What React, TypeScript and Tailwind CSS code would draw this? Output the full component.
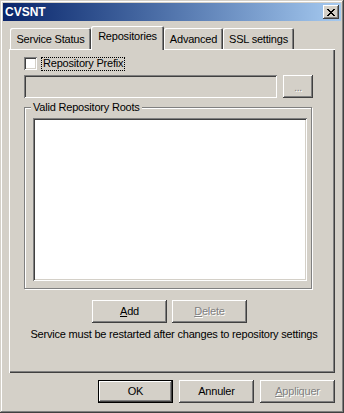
import React from "react";

const raised =
  "shadow-[inset_-1px_-1px_#404040,inset_1px_1px_#ffffff,inset_-2px_-2px_#808080,inset_2px_2px_#d4d0c8]";
const sunken =
  "shadow-[inset_1px_1px_#808080,inset_-1px_-1px_#ffffff,inset_2px_2px_#404040,inset_-2px_-2px_#d4d0c8]";

function Btn({
  children,
  className = "",
  disabled = false,
  def = false,
}: {
  children: React.ReactNode;
  className?: string;
  disabled?: boolean;
  def?: boolean;
}) {
  const base = def
    ? "border border-black shadow-[inset_-1px_-1px_#404040,inset_1px_1px_#ffffff,inset_-2px_-2px_#808080]"
    : raised;
  return (
    <div
      className={`w-[75px] h-[23px] bg-[#d4d0c8] flex items-center justify-center text-[11px] leading-none ${base} ${
        disabled ? "text-[#808080] [text-shadow:1px_1px_0_#ffffff]" : "text-black"
      } ${className}`}
    >
      {children}
    </div>
  );
}

function Tab({
  label,
  w,
  selected = false,
}: {
  label: string;
  w: string;
  selected?: boolean;
}) {
  return selected ? (
    <div
      className={`${w} h-[24px] -mb-[1px] relative z-10 bg-[#d4d0c8] rounded-tl-[2px] rounded-tr-[2px] shadow-[inset_1px_1px_#ffffff,inset_-1px_0_#404040,inset_-2px_0_#808080] flex justify-center pt-[4px] text-[11px] leading-[13px] text-black`}
    >
      {label}
    </div>
  ) : (
    <div
      className={`${w} h-[21px] bg-[#d4d0c8] rounded-tl-[2px] rounded-tr-[2px] shadow-[inset_1px_1px_#ffffff,inset_-1px_0_#404040,inset_-2px_0_#808080] flex justify-center pt-[5px] text-[11px] leading-[13px] text-black`}
    >
      {label}
    </div>
  );
}

export default function App() {
  return (
    <div className="w-[344px] h-[413px] bg-[#d4d0c8] font-['Liberation_Sans',Arial,sans-serif] tracking-[-0.2px] shadow-[inset_-1px_-1px_#404040,inset_1px_1px_#d4d0c8,inset_-2px_-2px_#808080,inset_2px_2px_#ffffff] p-[3px] flex flex-col select-none">
      {/* Title bar */}
      <div className="h-[18px] bg-gradient-to-r from-[#0a246a] to-[#a6caf0] flex items-center pl-[2px] pr-[2px]">
        <div className="text-white font-bold text-[12px] leading-none tracking-[0px]">CVSNT</div>
        <div className="flex-1" />
        <div className={`w-[16px] h-[14px] bg-[#d4d0c8] ${raised} flex items-center justify-center`}>
          <svg width="8" height="7" viewBox="0 0 8 7" shapeRendering="crispEdges">
            <path
              d="M0 0h2v1H0zM6 0h2v1H6zM1 1h2v1H1zM5 1h2v1H5zM2 2h4v1H2zM3 3h2v1H3zM2 4h4v1H2zM1 5h2v1H1zM5 5h2v1H5zM0 6h2v1H0zM6 6h2v1H6z"
              fill="#000"
            />
          </svg>
        </div>
      </div>

      {/* Body */}
      <div className="pl-[6px] flex flex-col">
        {/* Tabs */}
        <div className="mt-[5px] h-[23px] flex items-end pl-[1px]">
          <Tab label="Service Status" w="w-[81px]" />
          <Tab label="Repositories" w="w-[73px]" selected />
          <Tab label="Advanced" w="w-[59px]" />
          <Tab label="SSL settings" w="w-[71px]" />
        </div>

        {/* Panel */}
        <div className="w-[326px] h-[324px] bg-[#d4d0c8] shadow-[inset_1px_1px_#ffffff,inset_-1px_-1px_#404040,inset_-2px_-2px_#808080] pl-[15px] pr-[11px] pt-[8px] flex flex-col text-[11px] text-black">
          {/* Checkbox row */}
          <div className="h-[13px] flex items-center">
            <div className={`w-[13px] h-[13px] bg-white ${sunken}`} />
            <div className="ml-[4px] h-[14px] border border-dotted border-black px-[1px] flex items-center leading-none">
              Repository Prefix
            </div>
          </div>

          {/* Edit row */}
          <div className="mt-[5px] flex">
            <div className={`w-[253px] h-[23px] bg-[#d4d0c8] ${sunken}`} />
            <div className={`ml-[6px] w-[30px] h-[23px] bg-[#d4d0c8] ${raised} flex items-center justify-center text-[#808080] [text-shadow:1px_1px_0_#ffffff] text-[10px] leading-none pt-[3px]`}>
              ...
            </div>
          </div>

          {/* Group box */}
          <div className="mt-[9px] relative w-[288px] h-[182px] border border-[#808080] shadow-[1px_1px_0_#ffffff,inset_1px_1px_0_#ffffff] pl-[8px] pt-[10px]">
            <div className="absolute left-[6px] -top-[7px] bg-[#d4d0c8] px-[2px] leading-[13px]">
              Valid Repository Roots
            </div>
            <div className={`w-[274px] h-[163px] bg-white ${sunken}`} />
          </div>

          {/* Add / Delete */}
          <div className="mt-[11px] ml-[68px] flex gap-[5px]">
            <Btn>
              <span>
                <span className="underline">A</span>dd
              </span>
            </Btn>
            <Btn disabled>
              <span>
                <span className="underline">D</span>elete
              </span>
            </Btn>
          </div>

          <div className="mt-[5px] text-center leading-[13px] whitespace-nowrap">
            Service must be restarted after changes to repository settings
          </div>
        </div>

        {/* Bottom buttons */}
        <div className="mt-[7px] w-[326px] flex justify-end gap-[6px]">
          <Btn def>OK</Btn>
          <Btn>Annuler</Btn>
          <Btn disabled>
            <span>
              <span className="underline">A</span>ppliquer
            </span>
          </Btn>
        </div>
      </div>
    </div>
  );
}
